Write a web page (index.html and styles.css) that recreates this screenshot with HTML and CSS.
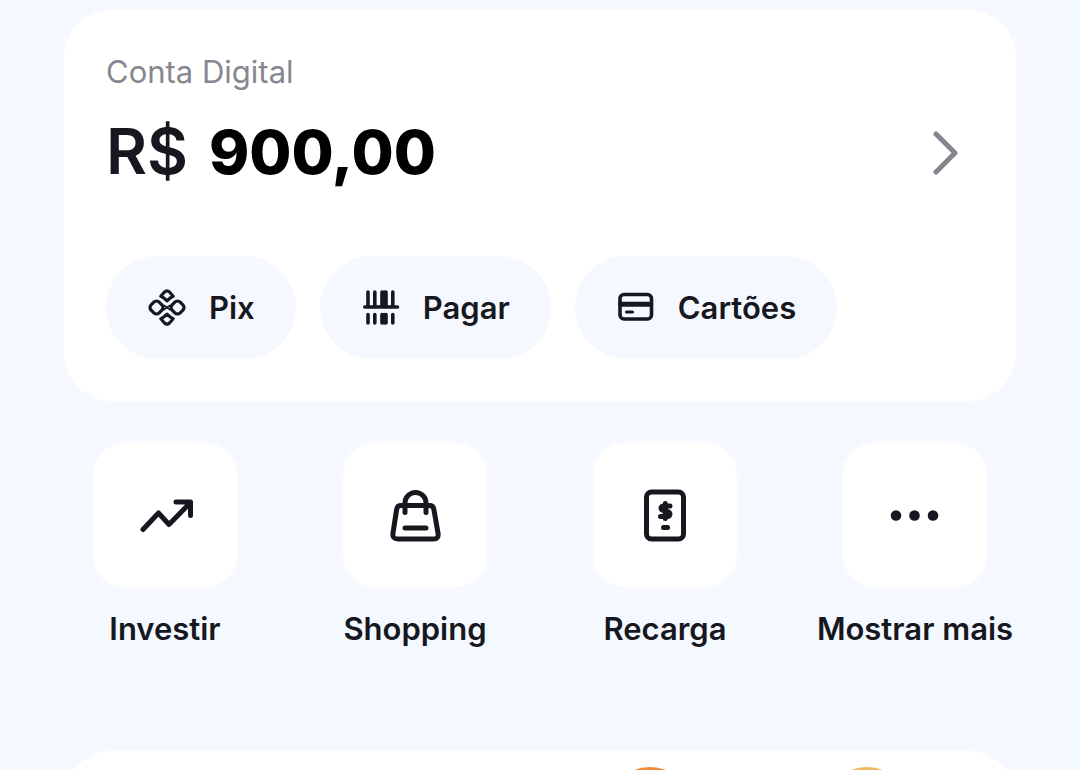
FILE: index.html
```html
<!DOCTYPE html>
<html lang="pt-BR">

<head>
    <meta charset="UTF-8">
    <meta name="viewport" content="width=device-width, initial-scale=1.0">
    <title>Conta Digital</title>

    <link rel="stylesheet" href="styles.css">
</head>

<body>

    <main class="main">
        <section class="card account">
            <div class="balance">
                <div>
                    <h2 class="label">Conta Digital</h2>
                    <p class="amount">R$ <strong>900,00</strong></p>
                </div>
                <a href="#" class="arrow" aria-label="Ver conta">
                    <svg width="28" height="44" viewBox="0 0 28 44">
                        <path d="M3 3L22 22L3 41" />
                    </svg>
                </a>
            </div>

            <div class="pills">
                <button type="button" class="pill">
                    <svg class="pill-icon" viewBox="0 0 40 40" stroke-width="3.2">
                        <path d="M13.8 8.200L17.500 4Q20 1.800 22.500 4L26.200 8.200Q23.500 9.200 20 12.800Q16.500 9.200 13.800 8.200Z" />
                        <path d="M13.8 30.800L17.500 35Q20 37.200 22.500 35L26.200 30.800Q23.500 29.800 20 26.200Q16.500 29.800 13.800 30.800Z" />
                        <rect x="3.800" y="13.800" width="11.400" height="11.400" rx="3.800" transform="rotate(45 9.500 19.500)" />
                        <rect x="24.800" y="13.800" width="11.400" height="11.400" rx="3.800" transform="rotate(45 30.500 19.500)" />
                        <path d="M17 17.500L23 21.500M23 17.500L17 21.500" stroke-width="2" />
                    </svg>
                    Pix
                </button>
                <button type="button" class="pill">
                    <svg class="pill-icon" viewBox="0 0 40 40" stroke-width="3.6">
                        <path d="M7 4V18M13.800 4V18M31.800 4V18M7 26.500V35M13.800 26.500V35M31.800 26.500V35M3.800 19H36.500" />
                        <path d="M21 4V18M23 4V18M25 4V18M21 26.500V35M23 26.500V35M25 26.500V35" />
                    </svg>
                    Pagar
                </button>
                <button type="button" class="pill">
                    <svg class="pill-icon" viewBox="0 0 40 40" stroke-width="3.6">
                        <rect x="4" y="6.500" width="31.500" height="24.500" rx="4" />
                        <path d="M4 15.500H35.500M4 17H35.500" />
                        <path d="M10.500 24H16.500" stroke-width="3" />
                    </svg>
                    Cartões
                </button>
            </div>
        </section>

        <nav class="shortcuts">
            <a href="#" class="shortcut">
                <span class="tile">
                    <svg class="tile-icon" viewBox="0 0 56 56" stroke-width="5">
                        <path d="M6 42.500L21.500 26L32 37.500L53 16M39 15H53.500V28.500" />
                    </svg>
                </span>
                Investir
            </a>
            <a href="#" class="shortcut">
                <span class="tile">
                    <svg class="tile-icon" viewBox="0 0 56 56" stroke-width="5">
                        <path d="M14 18.500H42.500Q46 18.500 46.800 22L51 46Q52 52 46.500 52H11Q5 52 6 46L9.700 22Q10.500 18.500 14 18.500Z" />
                        <path d="M18 25.500V16A10.500 10.500 0 0 1 39 16V25.500M18 41H39" />
                    </svg>
                </span>
                Shopping
            </a>
            <a href="#" class="shortcut">
                <span class="tile">
                    <svg class="tile-icon" viewBox="0 0 56 56" stroke-width="5">
                        <rect x="9.500" y="5" width="37" height="47" rx="5" />
                        <path d="M33 19H27Q23.800 19 24 21.500Q24.500 23.500 28 24Q32.800 24.500 33 27Q32.800 29.500 30 29.500H23.500M28.300 16.500V31.500" />
                        <path d="M26.500 40.500H30.500" />
                    </svg>
                </span>
                Recarga
            </a>
            <a href="#" class="shortcut">
                <span class="tile">
                    <svg class="tile-icon dots" viewBox="0 0 56 56">
                        <circle cx="9" cy="28.500" r="5.300" />
                        <circle cx="27.500" cy="28.500" r="5.300" />
                        <circle cx="46" cy="28.500" r="5.300" />
                    </svg>
                </span>
                Mostrar mais
            </a>
        </nav>

        <section class="card promo">
            <div class="coin orange"></div>
            <div class="coin yellow"></div>
        </section>
    </main>

</body>

</html>
```

FILE: styles.css
```css
* {
    margin: 0;
    padding: 0;
    box-sizing: border-box;
}

body {
    background: #f4f8ff;
    color: #17181f;
    font-family: Inter, sans-serif;
}

.main {
    display: flex;
    flex-direction: column;
    height: 100vh;
    padding: 10px 64px 0;
    overflow: hidden;
}

.card {
    flex-shrink: 0;
    background: #fff;
    border-radius: 48px;
    box-shadow: 0 0 20px #fafaff;
}

.account {
    padding: 42px;
}

.balance {
    display: flex;
    align-items: flex-end;
    justify-content: space-between;
    padding-right: 13px;
}

.label {
    font-size: 31px;
    font-weight: 400;
    line-height: 40px;
    color: #87878f;
}

.amount {
    margin-top: 19px;
    font-size: 63px;
    font-weight: 600;
    line-height: 80px;
}

.amount strong {
    margin-left: 5px;
    font-size: 61px;
    font-weight: 800;
    color: #000;
}

.arrow {
    display: flex;
    margin-bottom: 17px;
}

svg {
    fill: none;
    stroke: #17181f;
    stroke-linecap: round;
    stroke-linejoin: round;
}

.arrow svg {
    stroke: #85858f;
    stroke-width: 5;
}

.pills {
    display: flex;
    gap: 24px;
    margin-top: 64px;
}

.pill {
    display: flex;
    align-items: center;
    gap: 22px;
    height: 103px;
    padding: 0 41px;
    border: none;
    border-radius: 52px;
    background: #f6f8ff;
    color: inherit;
    font-family: inherit;
    font-size: 31px;
    font-weight: 600;
    cursor: pointer;
}

.pill-icon {
    width: 40px;
    height: 40px;
}

.shortcuts {
    display: grid;
    grid-template-columns: repeat(4, 1fr);
    margin: 42px -24px 0;
}

.shortcut {
    display: flex;
    flex-direction: column;
    align-items: center;
    gap: 22px;
    color: inherit;
    font-size: 31px;
    font-weight: 600;
    line-height: 40px;
    text-decoration: none;
    white-space: nowrap;
}

.tile {
    display: flex;
    align-items: center;
    justify-content: center;
    width: 144px;
    height: 144px;
    border-radius: 32px;
    background: #fff;
    box-shadow: 0 0 16px #fafbff;
}

.tile-icon {
    width: 56px;
    height: 56px;
}

.dots {
    fill: #17181f;
    stroke: none;
}

.promo {
    display: flex;
    justify-content: flex-end;
    gap: 129px;
    margin-top: 102px;
    padding: 16px 105px;
}

.coin {
    width: 88px;
    height: 88px;
    border-radius: 50%;
}

.orange {
    background: #ee8a3c;
}

.yellow {
    background: #f2b75c;
}
```
